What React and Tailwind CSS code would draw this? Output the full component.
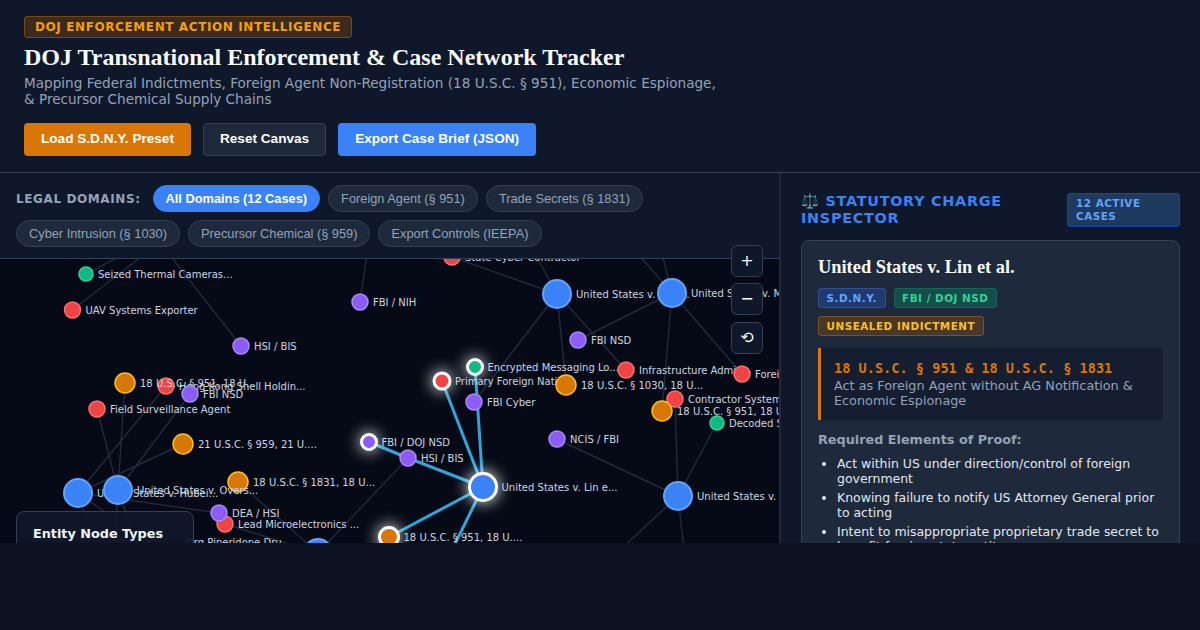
import React from 'react';

const COLORS = {
  case: ['#3b82f6', '#60a5fa'],
  charge: ['#d97706', '#fbbf24'],
  target: ['#ef4444', '#f87171'],
  agency: ['#8b5cf6', '#a78bfa'],
  evidence: ['#10b981', '#34d399'],
};

// draw order matters: later nodes sit on top of earlier labels
const NODES = [
  { x: 72.5, y: 310, r: 8, t: 'target', label: 'UAV Systems Exporter' },
  { x: 166, y: 386, r: 8, t: 'target', label: 'Hong Kong Shell Holdin...' },
  { x: 97, y: 409, r: 8, t: 'target', label: 'Field Surveillance Agent' },
  { x: 225, y: 524, r: 8, t: 'target', label: 'Lead Microelectronics ...' },
  { x: 452, y: 257, r: 8, t: 'target', label: 'State Cyber Contractor' },
  { x: 442, y: 381, r: 8, t: 'target', label: 'Primary Foreign Natio...', sel: true },
  { x: 626, y: 370, r: 8, t: 'target', label: 'Infrastructure Admin...' },
  { x: 675, y: 399, r: 8, t: 'target', label: 'Contractor Systems ...' },
  { x: 742, y: 374, r: 8, t: 'target', label: 'Foreign State...' },
  { x: 125, y: 383, r: 10, t: 'charge', label: '18 U.S.C. § 951, 18 U...' },
  { x: 183, y: 444, r: 10, t: 'charge', label: '21 U.S.C. § 959, 21 U....' },
  { x: 238, y: 482, r: 10, t: 'charge', label: '18 U.S.C. § 1831, 18 U...' },
  { x: 566, y: 385, r: 10, t: 'charge', label: '18 U.S.C. § 1030, 18 U...' },
  { x: 662, y: 411, r: 10, t: 'charge', label: '18 U.S.C. § 951, 18 U...' },
  { x: 389, y: 537, r: 9.5, t: 'charge', label: '18 U.S.C. § 951, 18 U....', sel: true },
  { x: 360, y: 302, r: 8, t: 'agency', label: 'FBI / NIH' },
  { x: 241, y: 346, r: 8, t: 'agency', label: 'HSI / BIS' },
  { x: 190, y: 394, r: 8, t: 'agency', label: 'FBI NSD' },
  { x: 219, y: 513, r: 8, t: 'agency', label: 'DEA / HSI' },
  { x: 578, y: 340, r: 8, t: 'agency', label: 'FBI NSD' },
  { x: 474, y: 402, r: 8, t: 'agency', label: 'FBI Cyber' },
  { x: 369, y: 442, r: 7.5, t: 'agency', label: 'FBI / DOJ NSD', sel: true },
  { x: 408, y: 458, r: 8, t: 'agency', label: 'HSI / BIS' },
  { x: 557, y: 439, r: 8, t: 'agency', label: 'NCIS / FBI' },
  { x: 86, y: 274, r: 7, t: 'evidence', label: 'Seized Thermal Cameras...' },
  { x: 475, y: 367, r: 7.5, t: 'evidence', label: 'Encrypted Messaging Lo...', sel: true },
  { x: 717, y: 423, r: 7, t: 'evidence', label: 'Decoded Satellite...' },
  { x: 483, y: 487, r: 13.5, t: 'case', label: 'United States v. Lin e...', sel: true },
  { x: 557, y: 294, r: 14, t: 'case', label: 'United States v. Wei ...' },
  { x: 678, y: 496, r: 14, t: 'case', label: 'United States v. Kao...' },
  { x: 78, y: 493, r: 14, t: 'case', label: 'United States v. Hubei...' },
  { x: 318, y: 553, r: 14, t: 'case', label: '' },
  { x: 118, y: 490, r: 14, t: 'case', label: 'United States v. Overs...' },
  { x: 672, y: 293, r: 14, t: 'case', label: 'United States v. Ma...' },
];

// x1 y1 x2 y2
const EDGES = [
  [86, 274, 124, 254], [72, 310, 145, 254], [241, 346, 169, 254], [360, 302, 367, 254],
  [452, 257, 557, 294], [557, 294, 535, 254], [672, 293, 638, 254], [672, 293, 662, 254],
  [557, 294, 474, 402], [557, 294, 566, 385], [557, 294, 626, 370], [672, 293, 578, 340],
  [672, 293, 662, 411], [672, 293, 742, 374], [678, 496, 675, 399], [678, 496, 717, 423],
  [678, 496, 557, 439], [678, 496, 620, 550], [678, 496, 684, 550],
  [97, 409, 118, 490], [125, 383, 118, 490], [166, 386, 78, 493], [190, 394, 118, 490],
  [183, 444, 78, 493], [78, 493, 219, 513],
  [78, 493, 130, 530], [78, 493, 90, 530], [118, 490, 115, 530], [118, 490, 132, 530],
  [238, 482, 318, 553], [225, 524, 318, 553], [408, 458, 318, 553],
];

const ACTIVE_EDGES = [
  [483, 487, 442, 381], [483, 487, 475, 367], [483, 487, 408, 458], [408, 458, 369, 442],
  [483, 487, 389, 537], [483, 487, 452, 550],
];

const Node = ({ n }) => {
  const [fill, ring] = COLORS[n.t];
  return (
    <g>
      <circle
        cx={n.x}
        cy={n.y}
        r={n.r}
        fill={fill}
        stroke={n.sel ? '#ffffff' : ring}
        strokeWidth={n.sel ? 3 : n.t === 'case' ? 2 : 1.5}
        style={n.sel ? { filter: 'drop-shadow(0 0 8px #ffffff)' } : undefined}
      />
      {n.label && (
        <text x={n.x + n.r + 5} y={n.y + 3.5} fontSize="10" fill="#cbd5e1" fontFamily="'DejaVu Sans', sans-serif">
          {n.label}
        </text>
      )}
    </g>
  );
};

const NetworkGraph = () => (
  <svg className="absolute left-0 top-[-259px] w-[780px] h-[630px]" viewBox="0 0 780 630">
    {EDGES.map((e, i) => (
      <line key={i} x1={e[0]} y1={e[1]} x2={e[2]} y2={e[3]} stroke="#232a3a" strokeWidth="1.4" />
    ))}
    {ACTIVE_EDGES.map((e, i) => (
      <line key={i} x1={e[0]} y1={e[1]} x2={e[2]} y2={e[3]} stroke="#2ea6da" strokeWidth="3" />
    ))}
    {NODES.map((n, i) => (
      <Node key={i} n={n} />
    ))}
    <text x="186" y="546" fontSize="10" fill="#cbd5e1" fontFamily="'DejaVu Sans', sans-serif">
      Org Piperidone Dru...
    </text>
  </svg>
);

const Pill = ({ children, active }) => (
  <button
    className={
      active
        ? 'h-[27px] px-[12px] rounded-full bg-[#3b82f6] border border-[#3b82f6] text-white text-[12.8px] font-bold font-["Liberation_Sans",sans-serif]'
        : 'h-[27px] px-[12px] rounded-full bg-[#1e293b] border border-[#334155] text-[#94a3b8] text-[12.8px] font-["Liberation_Sans",sans-serif]'
    }
  >
    {children}
  </button>
);

const ZoomButton = ({ children }) => (
  <button className="w-8 h-8 rounded-md bg-[#0f172a] border border-[#334155] text-white text-base leading-none flex items-center justify-center">
    {children}
  </button>
);

export default function App() {
  return (
    <div className="min-h-[630px] bg-[#0b1120] text-white font-['DejaVu_Sans',sans-serif]">
      {/* Header */}
      <header className="h-[173px] bg-[#0f172a] border-b border-[#334155] pt-4 px-6">
        <span className="block w-fit h-[22px] px-[10px] rounded-[3px] bg-[#3c2a1f] border border-[#78490f] text-[#f59e0b] text-xs font-bold tracking-[0.6px] leading-[20px]">
          DOJ ENFORCEMENT ACTION INTELLIGENCE
        </span>
        <h1 className="mt-[3px] text-2xl leading-8 font-bold text-[#f8fafc] font-['Liberation_Serif',serif]">
          DOJ Transnational Enforcement &amp; Case Network Tracker
        </h1>
        <p className="mt-[2px] max-w-[700px] text-[13.6px] leading-4 text-[#94a3b8]">
          Mapping Federal Indictments, Foreign Agent Non-Registration (18 U.S.C. § 951), Economic Espionage, &amp; Precursor Chemical Supply Chains
        </p>
        <div className="mt-4 flex gap-3 font-['Liberation_Sans',sans-serif] text-[13.6px] font-bold">
          <button className="h-[33px] px-[17px] rounded bg-[#d97706] text-white">Load S.D.N.Y. Preset</button>
          <button className="h-[33px] px-[16px] rounded bg-[#1e293b] border border-[#334155] text-white">Reset Canvas</button>
          <button className="h-[33px] px-[17px] rounded bg-[#3b82f6] text-white">Export Case Brief (JSON)</button>
        </div>
      </header>

      {/* Main */}
      <main className="h-[370px] flex overflow-hidden">
        <section className="relative w-[781px] shrink-0 bg-[#060a16] border-r-2 border-[#1e293b] flex flex-col">
          <div className="relative z-10 h-[86px] bg-[#0f172a] border-b border-[#334155] px-4 pt-3 flex flex-wrap content-start items-center gap-x-2 gap-y-2">
            <span className="mr-[4px] text-xs font-bold tracking-[0.6px] text-[#94a3b8]">LEGAL DOMAINS:</span>
            <Pill active>All Domains (12 Cases)</Pill>
            <Pill>Foreign Agent (§ 951)</Pill>
            <Pill>Trade Secrets (§ 1831)</Pill>
            <Pill>Cyber Intrusion (§ 1030)</Pill>
            <Pill>Precursor Chemical (§ 959)</Pill>
            <Pill>Export Controls (IEEPA)</Pill>
          </div>
          <div className="relative flex-1 overflow-hidden">
            <NetworkGraph />
            <div className="absolute left-4 top-[252px] w-[178px] h-[120px] rounded-lg bg-[#0f172a]/90 border border-[#334155] px-4 py-3">
              <h4 className="text-[12.8px] font-bold text-[#f1f5f9]">Entity Node Types</h4>
            </div>
          </div>
          <div className="absolute z-20 left-[731px] top-[72px] flex flex-col gap-[6.4px]">
            <ZoomButton>+</ZoomButton>
            <ZoomButton>−</ZoomButton>
            <ZoomButton>⟲</ZoomButton>
          </div>
        </section>

        <aside className="flex-1 min-w-0 bg-[#0f172a] px-5 pt-5">
          <div className="flex items-start justify-between gap-3 mb-[12.5px]">
            <h3 className="text-[14.4px] leading-[17px] font-bold tracking-[0.72px] text-[#3b82f6]">⚖️ STATUTORY CHARGE INSPECTOR</h3>
            <span className="shrink-0 w-[113px] px-[8px] py-[3px] rounded-[3px] bg-[#1e3a5f] border border-[#1e40af] text-[10.4px] leading-[13px] font-bold tracking-[0.52px] text-[#60a5fa]">
              12 ACTIVE CASES
            </span>
          </div>
          <div className="bg-[#1e293b] border border-[#334155] rounded-lg px-4 pt-4 pb-4">
            <h2 className="text-[18.4px] leading-[21px] font-bold text-[#f8fafc] font-['Liberation_Serif',serif]">United States v. Lin et al.</h2>
            <div className="mt-[10px] flex flex-wrap gap-2 text-[10.4px] leading-[14px] font-bold tracking-[0.52px]">
              <span className="px-[7.5px] py-[2px] rounded-[3px] bg-[#1e3a6e] border border-[#2f4f8f] text-[#60a5fa]">S.D.N.Y.</span>
              <span className="px-[7.5px] py-[2px] rounded-[3px] bg-[#134e4a] border border-[#166556] text-[#34d399]">FBI / DOJ NSD</span>
              <span className="px-[7.5px] py-[2px] rounded-[3px] bg-[#4a3728] border border-[#78532a] text-[#fbbf24]">UNSEALED INDICTMENT</span>
            </div>
            <div className="mt-3 bg-[#151d30] border-l-[3px] border-[#d97706] rounded-r px-[13px] py-3">
              <div className="text-[13.6px] leading-4 font-bold text-[#d97706] font-['DejaVu_Sans_Mono',monospace]">18 U.S.C. § 951 &amp; 18 U.S.C. § 1831</div>
              <div className="mt-[2px] text-[12.8px] leading-[15px] text-[#94a3b8]">Act as Foreign Agent without AG Notification &amp; Economic Espionage</div>
            </div>
            <div className="mt-[10px] text-[12.8px] font-bold text-[#94a3b8]">Required Elements of Proof:</div>
            <ul className="mt-[7px] pl-[19px] list-disc text-[12.48px] leading-[15px] text-[#e2e8f0] space-y-[4px]">
              <li>Act within US under direction/control of foreign government</li>
              <li>Knowing failure to notify US Attorney General prior to acting</li>
              <li>Intent to misappropriate proprietary trade secret to benefit foreign state entity</li>
            </ul>
          </div>
        </aside>
      </main>
    </div>
  );
}
